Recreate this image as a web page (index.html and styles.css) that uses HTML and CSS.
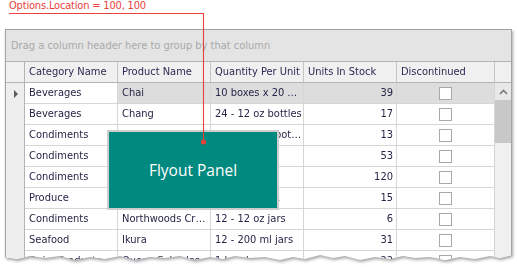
FILE: index.html
```html
<!DOCTYPE html>
<html>
<head>
<meta charset="utf-8">
<link rel="stylesheet" href="styles.css">
</head>
<body>
<div class="page">
  <div class="note">Options.Location = 100, 100</div>
  <div class="shadow">
    <div class="frame">
      <div class="group-panel">Drag a column header here to group by that column</div>
      <div class="row head">
        <div class="cell ind"></div>
        <div class="cell">Category Name</div>
        <div class="cell">Product Name</div>
        <div class="cell">Quantity Per Unit</div>
        <div class="cell">Units In Stock</div>
        <div class="cell">Discontinued</div>
        <div class="cell corner"></div>
      </div>
      <div class="body">
        <div class="rows">
          <div class="row focused">
            <div class="cell ind"><span class="arrow"></span></div>
            <div class="cell cur">Beverages</div>
            <div class="cell">Chai</div>
            <div class="cell">10 boxes x 20 …</div>
            <div class="cell num">39</div>
            <div class="cell chk"><span class="box"></span></div>
          </div>
          <div class="row">
            <div class="cell ind"></div>
            <div class="cell">Beverages</div>
            <div class="cell">Chang</div>
            <div class="cell">24 - 12 oz bottles</div>
            <div class="cell num">17</div>
            <div class="cell chk"><span class="box"></span></div>
          </div>
          <div class="row">
            <div class="cell ind"></div>
            <div class="cell">Condiments</div>
            <div class="cell">Aniseed Syrup</div>
            <div class="cell">12 - 550 ml bot…</div>
            <div class="cell num">13</div>
            <div class="cell chk"><span class="box"></span></div>
          </div>
          <div class="row">
            <div class="cell ind"></div>
            <div class="cell">Condiments</div>
            <div class="cell">Chef Anton's C…</div>
            <div class="cell">48 - 6 oz jars</div>
            <div class="cell num">53</div>
            <div class="cell chk"><span class="box"></span></div>
          </div>
          <div class="row">
            <div class="cell ind"></div>
            <div class="cell">Condiments</div>
            <div class="cell">Grandma's Boy…</div>
            <div class="cell">12 - 8 oz jars</div>
            <div class="cell num">120</div>
            <div class="cell chk"><span class="box"></span></div>
          </div>
          <div class="row">
            <div class="cell ind"></div>
            <div class="cell">Produce</div>
            <div class="cell">Uncle Bob's Or…</div>
            <div class="cell">12 - 1 lb pkg.</div>
            <div class="cell num">15</div>
            <div class="cell chk"><span class="box"></span></div>
          </div>
          <div class="row">
            <div class="cell ind"></div>
            <div class="cell">Condiments</div>
            <div class="cell">Northwoods Cr…</div>
            <div class="cell">12 - 12 oz jars</div>
            <div class="cell num">6</div>
            <div class="cell chk"><span class="box"></span></div>
          </div>
          <div class="row">
            <div class="cell ind"></div>
            <div class="cell">Seafood</div>
            <div class="cell">Ikura</div>
            <div class="cell">12 - 200 ml jars</div>
            <div class="cell num">31</div>
            <div class="cell chk"><span class="box"></span></div>
          </div>
          <div class="row">
            <div class="cell ind"></div>
            <div class="cell">Dairy Products</div>
            <div class="cell">Queso Cabrales</div>
            <div class="cell">1 kg pkg.</div>
            <div class="cell num">22</div>
            <div class="cell chk"><span class="box"></span></div>
          </div>
        </div>
        <div class="vscroll">
          <div class="sbtn">
            <svg width="9" height="6" viewBox="0 0 9 6"><path d="M1 5 L4.5 1.5 L8 5" fill="none" stroke="#7a7a7a" stroke-width="1.6"/></svg>
          </div>
          <div class="thumb"></div>
          <div class="track"></div>
        </div>
      </div>
      <div class="flyout">Flyout Panel</div>
    </div>
  </div>
  <svg class="callout" width="517" height="150" viewBox="0 0 517 150">
    <path d="M9 13.5 H203.5 V142" fill="none" stroke="#e8403c" stroke-width="1.1"/>
    <circle cx="203.5" cy="142" r="2.6" fill="#e8403c"/>
  </svg>
</div>
</body>
</html>
```

FILE: styles.css
```css
* { box-sizing: border-box; }
html, body { margin: 0; padding: 0; background: #ffffff; }
body {
  width: 517px;
  height: 267px;
  overflow: hidden;
  font-family: "DejaVu Sans Condensed", "DejaVu Sans", sans-serif;
  font-size: 11px;
}
.page { position: relative; width: 517px; height: 267px; }

.note {
  height: 29px;
  padding-left: 9px;
  line-height: 11px;
  color: #e8403c;
  font-size: 11px;
  letter-spacing: -0.18px;
}

.shadow {
  margin-left: 5px;
  width: 510px;
  filter: drop-shadow(1.5px 2px 1.5px rgba(0,0,0,0.35));
}

.frame {
  position: relative;
  width: 507px;
  height: 236px;
  border: 1px solid #a3a3a3;
  border-bottom: none;
  background: #ffffff;
  clip-path: polygon(0 0, 507px 0, 507px 226px, 495px 229px, 485px 227px, 470px 230px, 455px 228px, 440px 231px, 425px 228px, 410px 229px, 398px 227px, 385px 230px, 370px 228px, 355px 231px, 340px 227px, 328px 229px, 315px 226px, 300px 230px, 288px 228px, 275px 231px, 260px 228px, 245px 229px, 230px 227px, 218px 230px, 205px 228px, 190px 231px, 175px 227px, 160px 229px, 145px 228px, 130px 231px, 115px 227px, 100px 230px, 85px 228px, 70px 231px, 55px 227px, 40px 229px, 25px 227px, 12px 230px, 0 228px);
}

.group-panel {
  height: 32px;
  background: #e4e4e4;
  border-bottom: 1px solid #b4b4b4;
  color: #a9a9a9;
  padding-left: 5px;
  line-height: 31px;
}

.row {
  display: grid;
  grid-template-columns: 19px 93px 93px 93px 93px 98px;
  height: 21px;
}
.row.head {
  grid-template-columns: 19px 93px 93px 93px 93px 98px 16px;
  background: #f0f0f0;
  color: #2a2a52;
}
.cell {
  border-right: 1px solid #d6d6d6;
  border-bottom: 1px solid #d6d6d6;
  padding: 0 4px 0 4px;
  line-height: 20px;
  white-space: nowrap;
  overflow: hidden;
  color: #262648;
}
.head .cell {
  border-right-color: #c4c4c4;
  border-bottom-color: #b4b4b4;
  color: #2a2a52;
}
.head .corner { border-right: none; }

.cell.ind {
  background: #eeeeee;
  border-right-color: #b4b4b4;
  border-bottom: none;
  padding: 0;
  display: flex;
  align-items: center;
  justify-content: center;
}
.head .cell.ind { background: #f0f0f0; border-bottom: 1px solid #b4b4b4; }

.arrow {
  width: 0;
  height: 0;
  border-top: 4px solid transparent;
  border-bottom: 4px solid transparent;
  border-left: 4px solid #5e5e5e;
  margin-left: 1px;
}

.focused .cell { background: #dddddd; }
.focused .cell.cur { background: #ffffff; }
.focused .cell.ind { background: #eeeeee; }

.num { text-align: right; padding-right: 3px; }
.chk { display: flex; align-items: center; justify-content: center; }
.box {
  width: 13px;
  height: 13px;
  border: 1px solid #a8a8a8;
  background: #ffffff;
}

.body { display: flex; }
.rows { width: 489px; }
.vscroll {
  width: 16px;
  display: flex;
  flex-direction: column;
  background: #f0f0f0;
}
.sbtn {
  height: 17px;
  background: #e8e8e8;
  display: flex;
  align-items: center;
  justify-content: center;
}
.thumb { height: 43px; background: #c8c8c8; }
.track { flex: 1; background: #f0f0f0; }

.flyout {
  position: absolute;
  left: 101px;
  top: 100px;
  width: 172px;
  height: 80px;
  background: #00897f;
  border: 2px solid #cdcdcd;
  color: #ffffff;
  font-family: "Open Sans", "Noto Sans", sans-serif;
  font-size: 15.5px;
  font-weight: 500;
  display: flex;
  align-items: center;
  justify-content: center;
}

.callout {
  position: absolute;
  left: 0;
  top: 0;
  pointer-events: none;
}
```
